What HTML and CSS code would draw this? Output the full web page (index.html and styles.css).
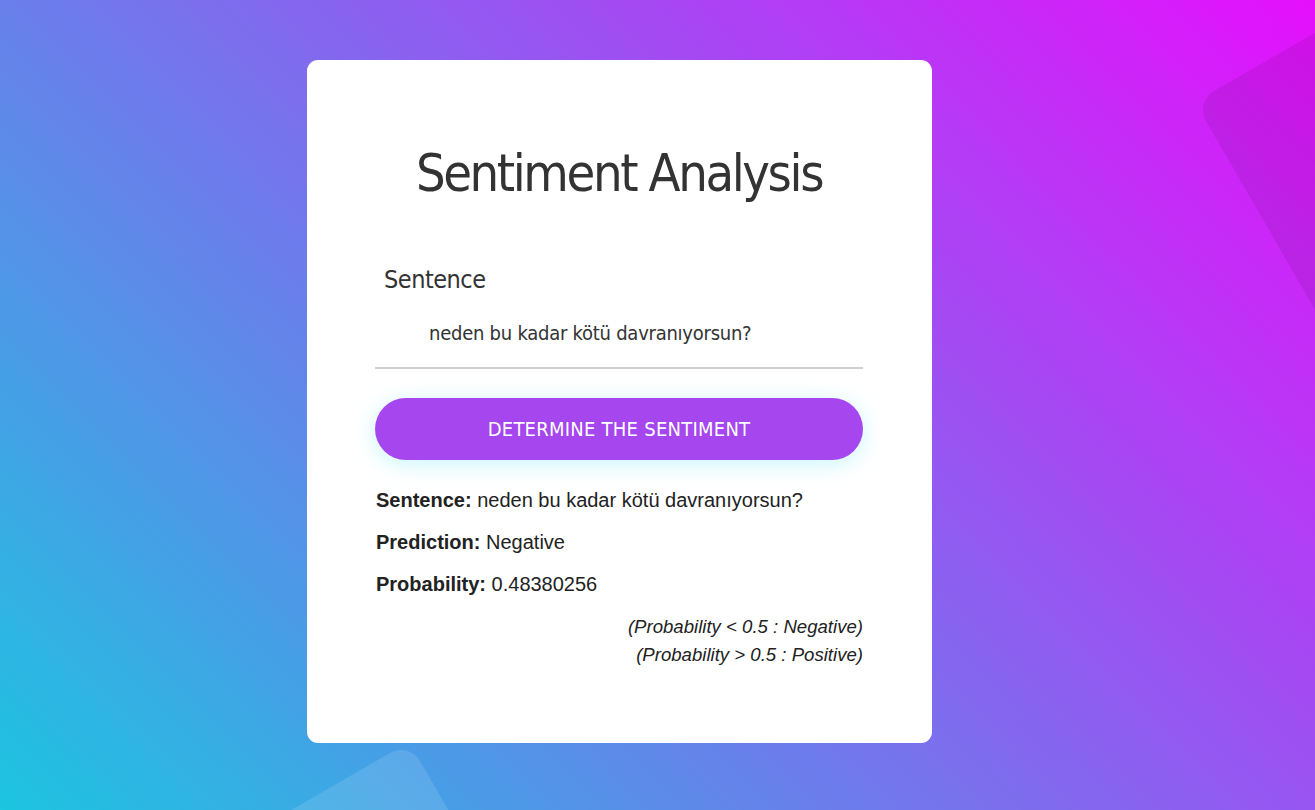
FILE: index.html
```html
<!DOCTYPE html>
<html lang="en">
<head>
<meta charset="utf-8">
<title>Sentiment Analysis</title>
<link rel="stylesheet" href="styles.css">
</head>
<body>
<div class="backdrop">
  <div class="shape shape-tr"></div>
  <div class="shape shape-bl"></div>
</div>
<main class="card">
  <h1 class="title">Sentiment Analysis</h1>
  <form class="form">
    <label class="label" for="sentence">Sentence</label>
    <input class="input" id="sentence" type="text" value="neden bu kadar kötü davranıyorsun?">
    <button class="btn" type="button">DETERMINE THE SENTIMENT</button>
  </form>
  <div class="results">
    <p class="row"><b>Sentence:</b> neden bu kadar kötü davranıyorsun?</p>
    <p class="row"><b>Prediction:</b> Negative</p>
    <p class="row"><b>Probability:</b> 0.48380256</p>
    <p class="note"><i>(Probability &lt; 0.5 : Negative)</i><br><i>(Probability &gt; 0.5 : Positive)</i></p>
  </div>
</main>
</body>
</html>
```

FILE: styles.css
```css
html, body {
  margin: 0;
  padding: 0;
  height: 100%;
  overflow: hidden;
}
body {
  position: relative;
  background: linear-gradient(45deg, #1cc5e0, #e50ffc);
  font-family: "DejaVu Sans", sans-serif;
  font-stretch: condensed;
  color: #333;
}
.backdrop {
  position: absolute;
  inset: 0;
  overflow: hidden;
}
.shape {
  position: absolute;
  border-radius: 22px;
}
.shape-tr {
  left: 1195px;
  top: 102px;
  width: 520px;
  height: 520px;
  transform-origin: top left;
  transform: rotate(-30deg);
  background: rgba(0, 0, 0, 0.08);
}
.shape-bl {
  left: 109px;
  top: 742px;
  width: 300px;
  height: 300px;
  transform-origin: top right;
  transform: rotate(-30deg);
  background: rgba(255, 255, 255, 0.12);
}
.card {
  position: relative;
  box-sizing: border-box;
  width: 625px;
  height: 683px;
  margin: 60px 0 0 307px;
  padding: 83px 69px 0 68px;
  background: #fff;
  border-radius: 11px;
}
.title {
  margin: 0;
  font-weight: normal;
  font-size: 52px;
  letter-spacing: -2.4px;
  line-height: 60px;
  text-align: center;
  color: #333;
}
.form {
  display: flex;
  flex-direction: column;
  margin-top: 62px;
}
.label {
  padding-left: 9px;
  font-size: 25px;
  letter-spacing: -0.5px;
  line-height: 30px;
  color: #333;
}
.input {
  box-sizing: border-box;
  margin-top: 12px;
  height: 62px;
  padding: 0 0 8px 54px;
  border: none;
  border-bottom: 2px solid #d0d0d0;
  outline: none;
  font-family: inherit;
  font-stretch: condensed;
  font-size: 20px;
  letter-spacing: -0.25px;
  color: #333;
  background: transparent;
}
.btn {
  margin-top: 29px;
  height: 62px;
  border: none;
  border-radius: 31px;
  background: #a546ee;
  color: #fff;
  font-family: inherit;
  font-stretch: condensed;
  font-size: 20px;
  letter-spacing: 0.25px;
  box-shadow: 0 4px 22px rgba(0, 215, 240, 0.22);
}
.results {
  margin-top: 29px;
  font-family: "Liberation Sans", Arial, sans-serif;
  font-stretch: normal;
  font-size: 20px;
  color: #222;
}
.row {
  margin: 0 0 19px 1px;
  line-height: 23px;
}
.note {
  margin: -2px 0 0;
  text-align: right;
  font-size: 18.6px;
  line-height: 28px;
}
```
